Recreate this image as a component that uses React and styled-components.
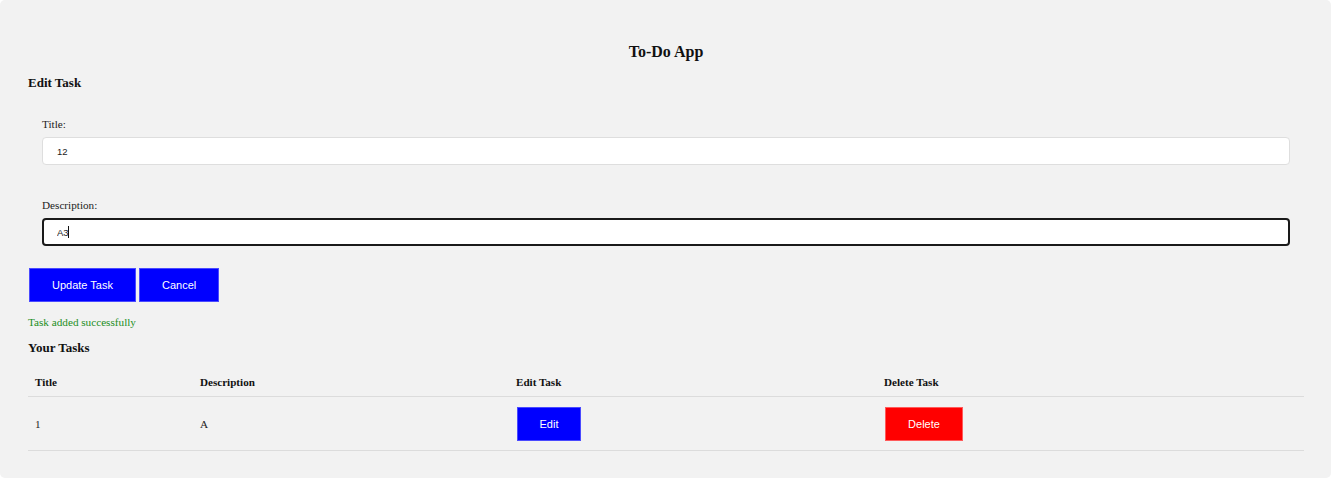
import React from 'react';
import styled, { createGlobalStyle } from 'styled-components';

const GlobalStyle = createGlobalStyle`
    body {
        margin: 0;
        background: #ffffff;
        font-family: "Liberation Serif", "Times New Roman", serif;
        color: #111;
    }
`;

const Container = styled.div`
    box-sizing: border-box;
    width: 1331px;
    height: 478px;
    padding: 42px 27px 26px 28px;
    border-radius: 5px;
    background: #f2f2f2;
`;
const Heading = styled.h2`
    margin: 0;
    font-size: 16px;
    line-height: 20px;
    text-align: center;
    font-weight: bold;
`;
const SubHeading = styled.h3`
    margin: ${props => (props.tight ? '11px' : '13px')} 0 0;
    font-size: 13px;
    line-height: 16px;
    font-weight: bold;
`;
const FormGroup = styled.div`
    padding: 0 14px;
    margin-top: ${props => props.top}px;
`;
const Label = styled.label`
    display: block;
    font-size: 11.2px;
    line-height: 14px;
    color: #222;
`;
const InputWrap = styled.div`
    position: relative;
    margin-top: 6px;
`;
const Input = styled.input`
    box-sizing: border-box;
    display: block;
    width: 100%;
    height: 28px;
    margin: 0;
    padding: 0 ${props => (props.focused ? '13px' : '14px')};
    border: ${props => (props.focused ? '2px solid #1a1a1a' : '1px solid #dedede')};
    border-radius: 4px;
    background: #ffffff;
    outline: none;
    font-family: "Liberation Sans", Arial, sans-serif;
    font-size: 9.5px;
    color: #222;
`;
const Caret = styled.span`
    position: absolute;
    top: 8px;
    left: ${props => props.left}px;
    width: 1px;
    height: 12px;
    background: #111;
`;
const Actions = styled.div`
    display: flex;
    gap: 3px;
    margin: 22px 0 0 1px;
`;
const Button = styled.button`
    box-sizing: border-box;
    height: 34px;
    padding: 0 22px;
    border: 1px solid ${props => (props.danger ? '#ff5a5a' : '#4a4aff')};
    background: ${props => (props.danger ? '#ff0000' : '#0000ff')};
    color: #ffffff;
    font-family: "Liberation Sans", Arial, sans-serif;
    font-size: 11px;
    cursor: pointer;
`;
const Message = styled.p`
    margin: 13px 0 0;
    font-size: 11.2px;
    line-height: 14px;
    color: #1d8f1d;
`;
const Table = styled.table`
    width: 1276px;
    margin-top: 12px;
    border-collapse: collapse;
    table-layout: fixed;
`;
const Th = styled.th`
    box-sizing: border-box;
    width: ${props => props.w}px;
    padding: 7px;
    border-bottom: 1px solid #dcdcdc;
    font-size: 11.1px;
    line-height: 14px;
    text-align: left;
    font-weight: bold;
`;
const Td = styled.td`
    height: 34px;
    padding: 10px 7px 9px;
    border-bottom: 1px solid #dcdcdc;
    font-size: 11.2px;
    line-height: 14px;
    vertical-align: middle;
    color: #222;
`;
const CellButton = styled(Button)`
    width: ${props => (props.danger ? '78px' : '64px')};
    margin-left: 1px;
    padding: 0;
`;

const tasks = [{ title: '1', description: 'A' }];

const App = () =>
    <>
        <GlobalStyle />
        <Container>
            <Heading>To-Do App</Heading>
            <SubHeading>Edit Task</SubHeading>
            <FormGroup top={26}>
                <Label>Title:</Label>
                <InputWrap>
                    <Input defaultValue="12" readOnly />
                </InputWrap>
            </FormGroup>
            <FormGroup top={33}>
                <Label>Description:</Label>
                <InputWrap>
                    <Input focused defaultValue="A3" readOnly />
                    <Caret left={26} />
                </InputWrap>
            </FormGroup>
            <Actions>
                <Button>Update Task</Button>
                <Button>Cancel</Button>
            </Actions>
            <Message>Task added successfully</Message>
            <SubHeading tight>Your Tasks</SubHeading>
            <Table>
                <thead>
                    <tr>
                        <Th w={165}>Title</Th>
                        <Th w={316}>Description</Th>
                        <Th w={368}>Edit Task</Th>
                        <Th w={427}>Delete Task</Th>
                    </tr>
                </thead>
                <tbody>
                    {tasks.map(task =>
                        <tr key={task.title}>
                            <Td>{task.title}</Td>
                            <Td>{task.description}</Td>
                            <Td><CellButton>Edit</CellButton></Td>
                            <Td><CellButton danger>Delete</CellButton></Td>
                        </tr>
                    )}
                </tbody>
            </Table>
        </Container>
    </>

export default App;
